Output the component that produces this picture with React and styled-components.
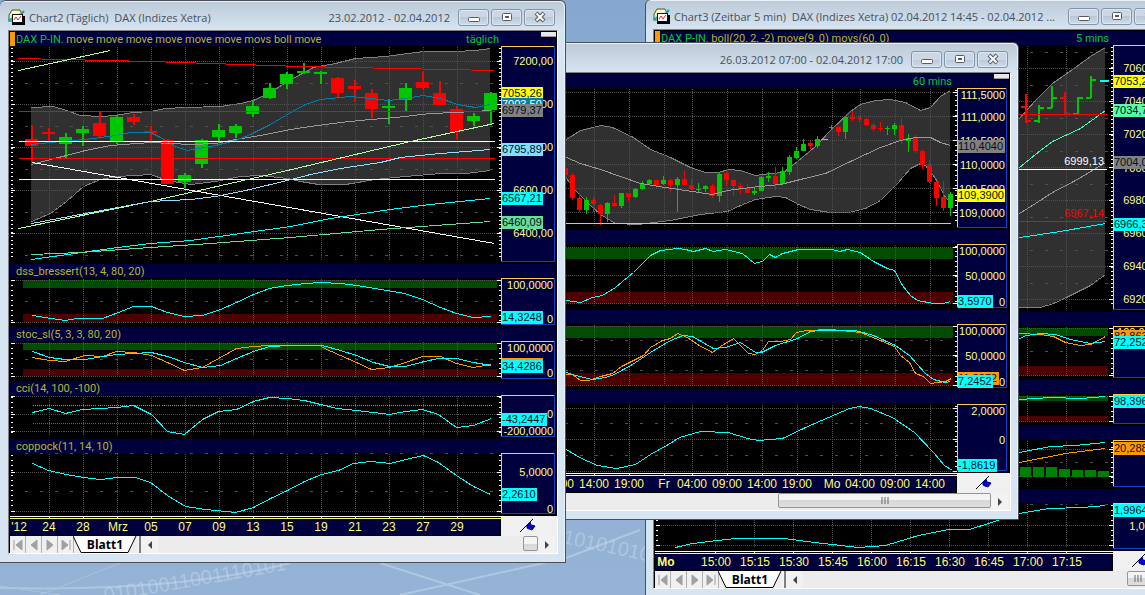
import React from "react";
import styled, { createGlobalStyle } from "styled-components";

const NAVY = "#00003f";
const CYAN = "#00ffff";
const RED = "#ff0000";
const GREEN = "#00c800";
const ORANGE = "#ff9900";
const YELLOW = "#ffff00";
const GREY = "#808080";

// candle: [x, high, low, bodyTop, bodyBottom, color]
const dailyCandles = [
  [31, 125, 162, 139, 146, "r"],
  [48, 128, 141, 132, 134, "r"],
  [65, 133, 159, 137, 144, "g"],
  [82, 126, 146, 129, 133, "g"],
  [99, 112, 138, 123, 136, "r"],
  [116, 116, 144, 117, 142, "g"],
  [133, 114, 125, 117, 122, "r"],
  [150, 126, 141, 131, 133, "r"],
  [167, 139, 184, 140, 184, "r"],
  [184, 173, 188, 175, 182, "g"],
  [201, 139, 168, 140, 164, "g"],
  [218, 124, 141, 130, 137, "g"],
  [235, 124, 138, 126, 133, "g"],
  [252, 101, 117, 106, 114, "g"],
  [269, 83, 99, 88, 98, "g"],
  [286, 72, 89, 74, 84, "g"],
  [303, 63, 74, 71, 73, "g"],
  [320, 71, 84, 72, 74, "g"],
  [337, 77, 97, 78, 93, "r"],
  [354, 80, 102, 86, 89, "r"],
  [371, 89, 118, 93, 109, "r"],
  [388, 99, 124, 106, 108, "g"],
  [405, 83, 111, 88, 100, "g"],
  [422, 72, 89, 82, 88, "r"],
  [439, 81, 105, 93, 105, "r"],
  [456, 106, 139, 109, 132, "r"],
  [473, 113, 126, 116, 121, "g"],
  [490, 92, 124, 93, 110, "g"],
];

const hourCandles = [
  [565, 168, 175, 168, 175, "r"],
  [572, 173, 200, 175, 198, "r"],
  [579, 193, 212, 198, 210, "r"],
  [586, 197, 214, 200, 210, "g"],
  [593, 197, 212, 200, 204, "r"],
  [600, 204, 225, 205, 214, "r"],
  [607, 202, 222, 203, 214, "g"],
  [614, 195, 207, 203, 206, "r"],
  [621, 193, 208, 193, 206, "g"],
  [628, 193, 201, 193, 197, "r"],
  [635, 188, 198, 189, 197, "g"],
  [642, 181, 190, 184, 189, "g"],
  [649, 179, 185, 180, 184, "g"],
  [656, 180, 187, 180, 185, "r"],
  [663, 176, 185, 180, 184, "g"],
  [670, 179, 192, 180, 185, "r"],
  [677, 177, 212, 179, 185, "g"],
  [684, 171, 185, 179, 185, "r"],
  [691, 179, 190, 185, 189, "r"],
  [698, 183, 193, 189, 190, "g"],
  [705, 185, 192, 186, 189, "g"],
  [712, 184, 198, 186, 196, "r"],
  [719, 172, 202, 174, 196, "g"],
  [726, 172, 186, 173, 180, "r"],
  [733, 179, 196, 180, 186, "r"],
  [740, 183, 194, 186, 188, "r"],
  [747, 184, 193, 188, 193, "r"],
  [754, 188, 195, 191, 193, "g"],
  [761, 176, 191, 177, 191, "g"],
  [768, 172, 182, 176, 178, "g"],
  [775, 167, 190, 176, 184, "r"],
  [782, 167, 184, 171, 184, "g"],
  [789, 155, 175, 157, 172, "g"],
  [796, 147, 159, 151, 158, "g"],
  [803, 139, 151, 144, 151, "g"],
  [810, 141, 149, 143, 146, "r"],
  [817, 136, 148, 139, 146, "g"],
  [831, 125, 130, 127, 128, "g"],
  [838, 126, 136, 127, 132, "r"],
  [845, 116, 139, 117, 132, "g"],
  [852, 111, 121, 117, 119, "r"],
  [859, 116, 122, 118, 119, "r"],
  [866, 118, 126, 119, 125, "r"],
  [873, 123, 131, 125, 129, "r"],
  [880, 122, 132, 128, 129, "r"],
  [887, 126, 135, 128, 129, "g"],
  [894, 123, 135, 125, 129, "g"],
  [901, 118, 144, 125, 141, "r"],
  [908, 134, 152, 138, 141, "g"],
  [915, 135, 153, 138, 151, "r"],
  [922, 149, 169, 151, 165, "r"],
  [929, 160, 183, 165, 182, "r"],
  [936, 181, 206, 182, 198, "r"],
  [943, 181, 211, 197, 208, "r"],
  [950, 192, 216, 194, 208, "g"],
];

// bar: [x, high, low, open, close, color]
const fiveMinBars = [
  [1026, 94, 123, 107, 121, "r"],
  [1039, 105, 123, 121, 108, "g"],
  [1052, 86, 108, 108, 98, "g"],
  [1065, 92, 115, 98, 114, "r"],
  [1078, 97, 114, 114, 98, "g"],
  [1091, 76, 98, 98, 80, "g"],
];

const range = (start, step, count) =>
  Array.from({ length: count }, (_, i) => start + i * step);

const dailyChart = {
  left: 10,
  width: 547,
  plotEnd: 494,
  axisX: 501,
  axisEnd: 555,
  grid: range(49, 34, 13),
  panes: [
    {
      label: (
        <>
          <i>DAX P-IN.</i> move move move move move move movs boll move
        </>
      ),
      corner: "täglich",
      top: 46,
      height: 218,
      dotted: [61, 104, 147, 190, 233],
      dashed: [83, 126, 169, 212, 255],
      tick: 4,
      fill: "31,107 53,106 66,110 80,115 100,116 115,115 133,112 150,111 165,108 185,107 220,106 240,103 253,100 270,92 287,81 300,74 313,67 335,63 355,58 385,56 423,51 455,51 475,50 490,48 490,170 465,173 440,173 405,176 375,179 345,184 318,184 300,181 287,178 260,175 240,176 215,181 190,184 167,180 150,174 135,175 117,176 100,179 83,186 66,201 50,213 31,221",
      candles: dailyCandles,
      body: 13,
      lines: [
        ["#999999", "31,164 50,159 66,155 85,150 110,145 150,142 190,144 215,143 235,139 260,135 290,129 310,126 340,122 370,119 395,117 430,113 455,112 490,110"],
        ["#0080a8", "31,144 60,141 85,139 115,135 130,132 150,132 160,137 175,146 187,150 215,145 235,140 250,134 270,124 290,112 305,104 320,99 350,96 370,98 388,100 405,98 423,95 440,98 457,104 475,107 490,104"],
        [RED, "18,58 150,61 300,66 494,70"],
        [RED, "18,111 494,111"],
        ["#ffffff", "18,141 494,141"],
        [RED, "18,158 494,158"],
        ["#ffffff", "18,179 494,179"],
        ["#b0ffa0", "18,70 110,50"],
        ["#b0ffa0", "18,228 150,201 287,170 410,141 494,123"],
        ["#ffffff", "32,162 494,243"],
        ["#90e0ff", "31,223 150,201 190,199 215,196 245,190 287,180 310,174 340,168 380,162 400,157 440,153 490,149"],
        [CYAN, "31,259 110,248 150,243 190,240 240,233 290,226 330,218 390,209 430,204 490,198"],
        ["#66dd99", "31,254 80,252 150,247 210,243 290,237 380,229 490,221"],
      ],
      labels: [["7200,00", 61], ["7000,00", 104], ["6800,00", 147], ["6600,00", 190], ["6400,00", 233]],
      tags: [
        ["7053,26", 93, YELLOW],
        ["7003,50", 104, "#0080a8", "#ffffff"],
        ["6979,37", 110, GREY],
        ["6795,89", 149, "#80dfff"],
        ["6567,21", 198, CYAN],
        ["6460,09", 222, "#66dd99"],
      ],
    },
    {
      label: "dss_bressert(13, 4, 80, 20)",
      top: 278,
      height: 49,
      zones: [[280, 8, "#004c00"], [314, 8, "#4c0000"]],
      zoneX: 23,
      dotted: [280, 322],
      dashed: [301],
      lines: [
        [CYAN, "32,315 51,318 65,320 76,318 102,318 118,312 133,306 151,306 167,312 184,316 202,315 220,309 236,302 253,294 269,288 287,285 305,283 320,282 340,283 356,285 375,288 404,293 422,299 440,307 456,313 473,317 491,316"],
      ],
      labels: [["100,0000", 285], ["0", 319]],
      tags: [["14,3248", 317, CYAN]],
    },
    {
      label: "stoc_sl(5, 3, 3, 80, 20)",
      top: 341,
      height: 40,
      zones: [[343, 7, "#004c00"], [369, 7, "#4c0000"]],
      zoneX: 23,
      dotted: [343, 376],
      dashed: [359],
      lines: [
        [ORANGE, "32,357 49,360 65,361 84,355 102,356 116,351 133,352 151,355 167,362 184,370 202,367 220,357 236,348 253,346 269,345 320,345 322,347 340,355 356,362 371,369 389,367 405,362 422,356 440,356 456,363 473,367 491,364"],
        [CYAN, "32,351 49,357 65,359 84,359 116,354 133,353 151,352 167,356 184,362 202,367 220,365 236,358 253,351 269,346 291,345 322,345 340,350 356,355 373,362 389,366 405,366 424,361 438,358 456,358 473,362 491,365"],
      ],
      labels: [["100,0000", 348], ["0", 373]],
      tags: [["34,4286", 364, ORANGE], ["34,4286", 366, CYAN]],
    },
    {
      label: "cci(14, 100, -100)",
      top: 395,
      height: 44,
      dotted: [396, 414, 431],
      dashed: [],
      levels: [[405, "#00ff00"], [423, "#ff2020"]],
      lines: [
        [CYAN, "32,412 49,408 65,413 82,409 116,407 133,405 151,414 167,431 184,434 202,419 218,411 236,409 253,401 269,397 287,398 304,400 320,404 337,408 356,410 373,412 389,414 405,411 422,409 438,414 456,427 473,425 491,418"],
      ],
      labels: [["0", 414], ["-200,0000", 431]],
      tags: [["-43,2447", 419, CYAN]],
    },
    {
      label: "coppock(11, 14, 10)",
      top: 453,
      height: 63,
      dotted: [472, 511],
      dashed: [453, 491],
      lines: [
        [CYAN, "32,463 48,470 66,474 83,477 100,479 117,477 135,477 150,482 167,495 185,506 205,509 235,512 253,507 270,498 287,490 304,481 321,474 338,470 353,463 370,461 390,463 405,459 423,455 438,462 456,475 473,486 490,494"],
      ],
      labels: [["5,0000", 472], ["0", 509]],
      tags: [["2,2610", 494, CYAN]],
    },
  ],
  times: [
    ["'12", 19], ["24", 49], ["28", 83], ["Mrz", 118], ["05", 151], ["07", 185], ["09", 219],
    ["13", 253], ["15", 287], ["19", 321], ["21", 355], ["23", 389], ["27", 423], ["29", 457],
  ],
};

const hourChart = {
  left: 490,
  width: 520,
  plotEnd: 950,
  axisX: 957,
  axisEnd: 1007,
  grid: [559, 594, 629, 664, 692, 727, 762, 797, 832, 860, 895, 930],
  panes: [
    {
      label: "",
      corner: "60 mins",
      top: 88,
      height: 142,
      dotted: [92, 116, 140, 164, 188, 212],
      dashed: [],
      fill: "560,142 566,139 580,130 601,125 612,127 633,137 650,149 670,157 690,167 705,172 718,172 728,169 740,170 755,175 770,173 783,172 797,161 815,146 830,130 850,111 860,104 875,100 890,99 905,102 920,110 930,107 940,96 950,90 950,202 945,197 935,178 925,165 920,163 910,168 897,183 880,200 865,208 848,212 830,212 810,209 798,204 785,197 775,196 755,199 740,205 727,211 700,214 670,220 638,224 615,223 600,214 590,205 575,190 566,178 560,170",
      candles: hourCandles,
      body: 5,
      thin: true,
      lines: [
        ["#999999", "560,155 566,157 580,163 600,169 620,176 640,183 665,187 685,190 712,194 727,190 750,187 780,184 800,179 825,173 850,161 880,147 900,140 915,137 930,137 940,142 950,145"],
        [CYAN, "821,139 827,139"],
        ["#90f080", "560,223 950,223"],
      ],
      labels: [["111,5000", 95], ["111,0000", 117], ["110,5000", 141], ["110,0000", 165], ["109,5000", 189], ["109,0000", 213]],
      tags: [["110,4040", 146, GREY], ["109,3900", 195, YELLOW]],
    },
    {
      label: "",
      top: 244,
      height: 66,
      zones: [[248, 11, "#004c00"], [292, 11, "#4c0000"]],
      zoneX: 520,
      dotted: [247, 275, 303],
      dashed: [],
      lines: [
        [CYAN, "560,299 566,300 580,302 592,297 602,295 615,287 622,281 633,272 650,255 660,250 677,248 685,249 693,251 705,248 713,251 725,249 742,253 754,263 762,261 769,254 775,257 782,253 798,249 832,249 839,251 847,249 860,252 873,261 887,268 894,270 902,285 910,295 917,300 933,303 943,303 950,301"],
      ],
      labels: [["100,0000", 251], ["50,0000", 276], ["0", 302]],
      tags: [["3,5970", 301, CYAN]],
    },
    {
      label: "",
      top: 324,
      height: 66,
      zones: [[326, 12, "#004c00"], [373, 12, "#4c0000"]],
      zoneX: 520,
      dotted: [326, 355, 385],
      dashed: [340, 370],
      lines: [
        [ORANGE, "560,374 572,374 580,380 588,380 600,376 612,373 621,366 643,355 650,347 662,340 670,338 677,333 687,337 697,344 712,352 720,346 733,338 740,345 748,353 755,354 762,350 768,341 780,341 790,339 796,332 806,330 830,329 860,332 875,338 894,346 900,355 909,362 915,373 923,376 930,383 945,381 951,378"],
        [CYAN, "560,371 566,372 575,375 592,379 605,377 614,374 632,364 650,352 670,340 683,335 692,336 713,348 725,347 740,342 755,352 761,352 775,345 797,338 810,331 820,330 855,330 873,335 895,345 909,355 925,373 933,379 945,382 950,381"],
      ],
      labels: [["100,0000", 331], ["50,0000", 356], ["0", 382]],
      tags: [["11,2872", 378, ORANGE], ["7,2452", 381, CYAN]],
    },
    {
      label: "",
      top: 404,
      height: 69,
      dotted: [408, 439, 471],
      dashed: [423, 455],
      lines: [
        [CYAN, "560,445 566,449 579,457 597,465 616,468 635,464 650,454 668,444 679,437 700,431 728,432 747,438 758,440 782,438 803,428 821,420 849,408 859,406 870,408 892,417 914,432 933,452 944,465 952,470"],
      ],
      labels: [["2,0000", 411], ["0", 440]],
      tags: [["-1,8619", 465, CYAN]],
    },
  ],
  times: [
    ["09:00", 559], ["14:00", 594], ["19:00", 629], ["Fr", 664], ["04:00", 692], ["09:00", 727],
    ["14:00", 762], ["19:00", 797], ["Mo", 832], ["04:00", 860], ["09:00", 895], ["14:00", 930],
  ],
};

const fiveMinChart = {
  left: 655,
  width: 512,
  plotEnd: 1105,
  axisX: 1113,
  axisEnd: 1165,
  grid: range(715, 39, 10),
  panes: [
    {
      label: (
        <>
          <i>DAX P-IN.</i> boll(20, 2, -2) move(9, 0) movs(60, 0)
        </>
      ),
      corner: "5 mins",
      top: 45,
      height: 267,
      dotted: range(68, 33, 8),
      dashed: range(52, 33, 8),
      tick: 4,
      fill: "1000,138 1019,118 1035,100 1052,83 1075,67 1090,56 1105,47 1105,274 1090,285 1066,297 1053,303 1040,307 1000,307",
      bars: fiveMinBars,
      lines: [
        ["#999999", "1010,218 1019,213 1035,203 1052,192 1075,180 1092,170 1105,162"],
        ["#44ffaa", "1010,174 1019,167 1040,150 1052,141 1080,128 1105,110"],
        [RED, "1010,114 1106,114"],
        ["#ffffff", "1010,169 1106,169"],
        [RED, "1010,221 1106,221"],
        [CYAN, "1010,238 1019,237 1060,231 1105,223"],
        [CYAN, "1099,80 1108,80", 2],
      ],
      notes: [["6999,13", 161, "#ffffff"], ["6967,14", 213, RED]],
      labels: [["7060,00", 68], ["7040,00", 101], ["7020,00", 134], ["7000,00", 168], ["6980,00", 200], ["6960,00", 233], ["6940,00", 266], ["6920,00", 299]],
      tags: [
        ["7053,26", 81, YELLOW],
        ["7034,72", 110, "#55ffaa"],
        ["7004,04", 162, GREY],
        ["6966,37", 224, CYAN],
      ],
    },
    {
      label: "",
      top: 326,
      height: 54,
      zones: [[328, 8, "#004c00"], [366, 9, "#4c0000"]],
      zoneX: 665,
      dotted: [328, 375],
      dashed: [351],
      lines: [
        [ORANGE, "1010,332 1019,333 1040,334 1053,336 1065,342 1080,345 1090,344 1105,336"],
        [CYAN, "1010,342 1019,338 1026,335 1040,333 1055,334 1070,339 1090,343 1105,341"],
      ],
      labels: [["100,0000", 332]],
      tags: [["82,8635", 336, ORANGE], ["72,2523", 342, CYAN]],
    },
    {
      label: "",
      top: 394,
      height: 32,
      zones: [[396, 5, "#004c00"], [416, 5, "#4c0000"]],
      zoneX: 665,
      dotted: [396, 421],
      dashed: [],
      lines: [[CYAN, "1010,399 1019,399 1050,397 1080,398 1105,396"]],
      labels: [],
      tags: [["98,3961", 401, CYAN]],
    },
    {
      label: "",
      top: 440,
      height: 49,
      dotted: [449, 476],
      dashed: [462],
      histogram: [[1020, 467], [1033, 467], [1046, 467], [1059, 469], [1072, 470], [1085, 470], [1098, 471]],
      lines: [
        [CYAN, "1010,454 1019,452 1050,446 1075,445 1105,442"],
        [ORANGE, "1010,464 1019,462 1065,453 1105,448"],
      ],
      labels: [],
      tags: [["20,2889", 448, ORANGE]],
    },
    {
      label: "",
      top: 503,
      height: 48,
      dotted: [525, 545],
      dashed: [504],
      lines: [
        [CYAN, "675,547 692,543 717,540 735,538 784,538 814,542 858,547 885,545 918,535 948,529 969,529 988,523 1019,513 1049,508 1082,507 1105,505"],
      ],
      labels: [["1,0000", 526]],
      tags: [["1,9964", 510, CYAN]],
    },
  ],
  times: [
    ["Mo", 666, true], ["15:00", 716], ["15:15", 755], ["15:30", 794], ["15:45", 833], ["16:00", 872],
    ["16:15", 911], ["16:30", 950], ["16:45", 989], ["17:00", 1028], ["17:15", 1067],
  ],
};

const tone = (c) => (c === "r" ? RED : GREEN);

// width of a value in the 11px axis font
const textWidth = (text) =>
  text.split("").reduce((sum, ch) => sum + (ch === "," ? 3 : ch === "-" ? 4 : 6), 0);

// the upper edge ends where the outline turns straight down
const bandEdges = (outline) => {
  const points = outline.split(" ");
  const turn = points.findIndex(
    (p, i) => i > 0 && p.split(",")[0] === points[i - 1].split(",")[0]
  );
  return [points.slice(0, turn).join(" "), points.slice(turn).join(" ")];
};

const Plot = ({ chart, pane }) => {
  const { left, width, plotEnd, axisX, axisEnd, grid } = chart;
  const bottom = pane.top + pane.height;
  const axisBottom = bottom - 2;
  const step = pane.tick || 5;
  const ticks = range(pane.top + 2, step, Math.floor((pane.height - 4) / step));
  return (
    <Canvas
      viewBox={`${left} ${pane.top} ${width} ${pane.height}`}
      width="100%"
      height={pane.height}
      shapeRendering="crispEdges"
    >
      {pane.fill && <polygon points={pane.fill} fill="#303030" />}
      {(pane.zones || []).map(([y, h, fill]) => (
        <rect key={y} x={pane.zoneX} y={y} width={plotEnd - pane.zoneX + 3} height={h} fill={fill} />
      ))}
      <g transform="translate(0.5 0.5)" fill="none">
        {pane.fill &&
          bandEdges(pane.fill).map((edge) => (
            <polyline key={edge} points={edge} stroke="#808080" />
          ))}
        <g stroke="#505050" strokeDasharray="1 1">
          {grid.map((x) => (
            <path key={x} d={`M${x} ${pane.top}V${axisBottom - 2}`} />
          ))}
          {pane.dotted.map((y) => (
            <path key={y} d={`M${left + 5} ${y}H${plotEnd + 3}`} />
          ))}
          {pane.dashed.map((y) => (
            <path key={y} d={`M${left + 14} ${y}H${plotEnd + 3}`} strokeDasharray="3 12" />
          ))}
        </g>
        {(pane.levels || []).map(([y, c]) => (
          <path key={y} d={`M32 ${y}H491`} stroke={c} strokeDasharray="1 1" />
        ))}
        <g stroke="#ffffff">
          {ticks.map((y) => (
            <path key={y} d={`M${left} ${y}h2M${axisX - 3} ${y}h2`} />
          ))}
          {pane.dotted.map((y) => (
            <path key={y} d={`M${left} ${y}h4M${axisX - 5} ${y}h4`} />
          ))}
        </g>
      </g>
      {(pane.candles || []).map(([x, high, low, top, base, c]) => (
        <g key={x} fill={tone(c)}>
          <rect x={x} y={high} width={pane.thin ? 1 : 2} height={low - high} />
          <rect x={x - (pane.body - 1) / 2} y={top} width={pane.body} height={base - top} />
        </g>
      ))}
      {(pane.bars || []).map(([x, high, low, open, close, c]) => (
        <g key={x} fill={tone(c)}>
          <rect x={x - 1} y={high} width={2} height={low - high} />
          <rect x={x - 5} y={open - 1} width={5} height={2} />
          <rect x={x} y={close - 1} width={5} height={2} />
        </g>
      ))}
      {(pane.histogram || []).map(([x, y]) => (
        <rect key={x} x={x} y={y} width={11} height={477 - y} fill="#008000" />
      ))}
      <g transform="translate(0.5 0.5)" fill="none">
        {pane.lines.map(([c, points, w]) => (
          <polyline key={points + c} points={points} stroke={c} strokeWidth={w || 1} />
        ))}
      </g>
      {(pane.notes || []).map(([text, y, c]) => (
        <AxisText key={text} x={plotEnd - 1} y={y + 4} fill={c} textAnchor="end">
          {text}
        </AxisText>
      ))}
      <rect x={axisX} y={pane.top} width={axisEnd - axisX} height={axisBottom - pane.top} fill="#1040d0" />
      <rect x={axisX} y={pane.top} width={axisEnd - axisX - 1} height={axisBottom - pane.top - 1} fill="#ffcc44" />
      <rect x={axisX + 1} y={pane.top + 1} width={axisEnd - axisX - 2} height={axisBottom - pane.top - 2} fill={NAVY} />
      {pane.labels.map(([text, y]) => (
        <AxisText key={text} x={axisEnd - 2} y={y + 4} fill="#ffff88" textAnchor="end">
          {text}
        </AxisText>
      ))}
      {pane.tags.map(([text, y, bg, fg]) => (
        <g key={bg}>
          <rect x={axisX + 1} y={y - 6} width={textWidth(text) + 2} height={13} fill={bg} />
          <AxisText x={axisX + 1} y={y + 4} fill={fg || "#001020"}>
            {text}
          </AxisText>
        </g>
      ))}
    </Canvas>
  );
};

const TimeAxis = ({ chart }) => {
  const { left, width, axisX, grid, times } = chart;
  return (
    <Canvas viewBox={`${left} 0 ${width} 20`} width="100%" height="20" shapeRendering="crispEdges">
      <rect x={left} y="0" width={axisX - left} height="1" fill="#ffffff" />
      <rect x={left} y="2" width={axisX - left} height="1" fill="#ffff66" />
      <rect x={left} y="3" width={axisX - left - 1} height="16" fill={NAVY} />
      {grid.map((x) => (
        <rect key={x} x={x} y="0" width="1" height="3" fill="#ffff66" />
      ))}
      {times.map(([text, x, bold]) => (
        <TimeText key={x} x={x} y="15" textAnchor="middle" $bold={bold}>
          {text}
        </TimeText>
      ))}
      <rect x={axisX} y="0" width={left + width - axisX} height="20" fill="#f0f0f0" />
      <g transform={`translate(${axisX + 18} 2)`} shapeRendering="auto">
        <path d="M1 14L14 1" stroke="#000" />
        <path d="M8 7l3-3 1 3 4 1-3 4-3-1-2-1z" fill="#0000e0" stroke="#000080" />
      </g>
    </Canvas>
  );
};

const TitleIcon = () => (
  <svg width="17" height="16" viewBox="0 0 17 16">
    <path d="M1 6L4 1h8l2 4v7H1z" fill="#f0f09a" stroke="#55552a" />
    <path d="M4 3h8M3 5h8" stroke="#ffffff" />
    <path d="M0 12l5-3 4 1 7-8" stroke="#00a8d0" fill="none" strokeWidth="2" />
    <path d="M4 15h12V7" stroke="#000" strokeWidth="2" fill="none" />
    <rect x="4.5" y="5.5" width="10" height="8" fill="#ffffff" stroke="#111111" />
    <path d="M6 11l2-3 2 3 3-4" stroke="#dd2222" fill="none" />
  </svg>
);

const WindowButtons = () => (
  <ButtonGroup>
    <CaptionButton aria-label="Minimieren">
      <svg width="12" height="12">
        <rect x="0.5" y="6.5" width="11" height="4" rx="1" fill="#fff" stroke="#555b66" />
      </svg>
    </CaptionButton>
    <CaptionButton aria-label="Maximieren">
      <svg width="12" height="12">
        <rect x="1.5" y="2.5" width="9" height="7" rx="1" fill="#fff" stroke="#555b66" />
        <rect x="4.5" y="5.5" width="3" height="1" fill="#fff" stroke="#555b66" />
      </svg>
    </CaptionButton>
    <CaptionButton aria-label="Schließen">
      <svg width="12" height="12">
        <path d="M2 2l8 8M10 2l-8 8" stroke="#555b66" strokeWidth="4" />
        <path d="M2.5 2.5l7 7M9.5 2.5l-7 7" stroke="#fff" strokeWidth="2" />
      </svg>
    </CaptionButton>
  </ButtonGroup>
);

const SheetTabs = () => (
  <>
    {["M4 3v10M12 3v10L6 8z", "M11 3v10L5 8z", "M5 3v10l6-5z", "M4 3v10l6-5zM12 3v10"].map((d, i) => (
      <NavButton key={d} aria-label={`Blatt ${i + 1}`}>
        <svg width="14" height="16" viewBox="1 0 14 16">
          <path d={d} fill="#a0a0a0" stroke="#a0a0a0" />
        </svg>
      </NavButton>
    ))}
    <SheetTab>
      <svg width="64" height="17">
        <path d="M0 0L8 16H55L63 0z" fill="#fff" />
        <path d="M0 0L8 16.5H55L63 0" fill="none" stroke="#000" />
      </svg>
      <span>Blatt1</span>
    </SheetTab>
    <Splitter />
  </>
);

const ScrollArrow = ({ dir }) => (
  <ArrowButton aria-label={dir === "left" ? "Nach links" : "Nach rechts"}>
    <svg width="6" height="8">
      <path d={dir === "left" ? "M5 0v8L1 4z" : "M1 0v8L5 4z"} fill="#444" />
    </svg>
  </ArrowButton>
);

const ChartWindow = ({ frame, title, dates, chart, tabs, thumb, flush }) => (
  <Frame $frame={frame} $flush={flush}>
    <TitleBar>
      {title && <TitleIcon />}
      <Title>{title}</Title>
      <Title>{dates}</Title>
      <WindowButtons />
    </TitleBar>
    <Client>
      {chart.panes.map((pane) => (
        <React.Fragment key={pane.top}>
          <Strip $main={!!pane.corner}>
            <span>{pane.label}</span>
            {pane.corner && <Interval>{pane.corner}</Interval>}
            {pane.corner && <Grip />}
          </Strip>
          <Plot chart={chart} pane={pane} />
        </React.Fragment>
      ))}
      <TimeAxis chart={chart} />
      <BottomBar>
        {tabs && <SheetTabs />}
        <ScrollArrow dir="left" />
        <Track>
          <Thumb $width={thumb}>
            {thumb > 16 && (
              <svg width="8" height="7">
                <path d="M1 0v7M4 0v7M7 0v7" stroke="#666" />
              </svg>
            )}
          </Thumb>
        </Track>
        <ScrollArrow dir="right" />
      </BottomBar>
    </Client>
  </Frame>
);

const App = () => (
  <Desktop>
    <GlobalStyle />
    <Wallpaper viewBox="0 0 1145 595" preserveAspectRatio="xMinYMin slice">
      <path d="M0 588Q180 592 290 563M380 563L480 595M400 595L566 558L640 530" stroke="#c0d6ec" strokeWidth="2" fill="none" opacity="0.6" />
      <path d="M40 595L120 563M0 586L60 595" stroke="#a9c4e0" fill="none" />
      <WallText x="105" y="602" transform="rotate(-10 105 602)">01010011001110101</WallText>
      <WallText x="562" y="543" transform="rotate(12 562 543)">1010101010</WallText>
    </Wallpaper>
    <ChartWindow
      frame={[645, -1, 531, 598]}
      title="Chart3 (Zeitbar 5 min)&nbsp; DAX (Indizes Xetra) 02.04.2012 14:45 - 02.04.2012 ..."
      chart={fiveMinChart}
      tabs
      thumb={21}
    />
    <ChartWindow
      frame={[480, 42, 539, 478]}
      dates="26.03.2012 07:00 - 02.04.2012 17:00"
      chart={hourChart}
      thumb={213}
    />
    <ChartWindow
      frame={[0, 0, 566, 563]}
      title="Chart2 (Täglich)&nbsp; DAX (Indizes Xetra)"
      dates="23.02.2012 - 02.04.2012"
      chart={dailyChart}
      tabs
      thumb={15}
      flush
    />
  </Desktop>
);

const GlobalStyle = createGlobalStyle`
  body {
    margin: 0;
    overflow: hidden;
  }
`;

const Desktop = styled.main`
  position: relative;
  height: 100vh;
  overflow: hidden;
  background: linear-gradient(#86a8d0, #95b3d5);
  font-family: "Liberation Sans", Arial, sans-serif;
`;

const Wallpaper = styled.svg`
  display: block;
  width: 100%;
  height: 100%;
`;

const WallText = styled.text`
  font-size: 20px;
  fill: #c6d9ec;
  opacity: 0.5;
`;

const Frame = styled.section`
  position: absolute;
  left: ${({ $frame }) => $frame[0]}px;
  top: ${({ $frame }) => $frame[1]}px;
  width: ${({ $frame }) => $frame[2]}px;
  height: ${({ $frame }) => $frame[3]}px;
  box-sizing: border-box;
  display: flex;
  flex-direction: column;
  padding: 0 7px 7px ${({ $flush }) => ($flush ? 8 : 7)}px;
  border: 1px solid #4a4f57;
  border-left-width: ${({ $flush }) => ($flush ? 0 : 1)}px;
  border-radius: 6px 6px 0 0;
  background: linear-gradient(#bccad8, #d7e4f2 30px);
  box-shadow: inset -1px 1px 0 #e8f0f8;
`;

const TitleBar = styled.header`
  display: flex;
  flex: 0 0 29px;
  align-items: center;
  gap: 4px;
  padding: 3px 3px 0 0;
  box-sizing: border-box;
`;

const Title = styled.span`
  font: 11px "Open Sans", "Noto Sans", sans-serif;
  color: #46505c;
  white-space: nowrap;

  &:first-of-type {
    flex: 1;
  }
`;

const ButtonGroup = styled.div`
  display: flex;
  gap: 2px;
  margin-left: 4px;
`;

const CaptionButton = styled.button`
  display: flex;
  align-items: center;
  justify-content: center;
  width: 31px;
  height: 17px;
  padding: 0;
  border: 1px solid #8494a8;
  border-radius: 3px;
  background: linear-gradient(#cbd7e4 50%, #b9c8d8 50%, #cfdcea);
  box-shadow: inset 0 0 0 1px #dde7f1;
`;

const Client = styled.div`
  display: flex;
  flex-direction: column;
  padding: 1px 0 0 1px;
  border: 1px solid;
  border-color: #808080 #ffffff #ffffff #808080;
  background: #000;
`;

const Strip = styled.div`
  display: flex;
  align-items: center;
  height: 14px;
  box-sizing: border-box;
  margin-right: 1px;
  padding-left: ${({ $main }) => ($main ? 1 : 6)}px;
  border-left: ${({ $main }) => ($main ? `5px solid ${ORANGE}` : "0")};
  background: ${NAVY};
  color: #b8b820;
  font-family: Roboto, "Liberation Sans", sans-serif;
  font-size: 11px;
  white-space: pre;

  span:first-child {
    flex: 1;
  }

  i {
    font-style: normal;
    color: #00c838;
  }
`;

const Interval = styled.span`
  color: #00c838;
`;

const Grip = styled.div`
  align-self: flex-start;
  width: 15px;
  height: 5px;
  margin-left: 42px;
  box-sizing: border-box;
  background: #e8e8e8;
  border-bottom: 1px solid #999;
`;

const Canvas = styled.svg`
  display: block;
`;

const AxisText = styled.text`
  font-size: 11px;
`;

const TimeText = styled.text`
  font-size: 12px;
  font-weight: ${({ $bold }) => ($bold ? "bold" : "normal")};
  fill: #ffff66;
`;

const BottomBar = styled.footer`
  display: flex;
  height: 17px;
  padding-right: 2px;
  background: #eeeeee;
`;

const NavButton = styled.button`
  display: flex;
  align-items: center;
  justify-content: center;
  width: 16px;
  padding: 0;
  border: 0;
  border-right: 1px solid #b0b0b0;
  background: #f0f0f0;
`;

const SheetTab = styled.button`
  display: grid;
  align-items: center;
  justify-items: center;
  width: 64px;
  margin-left: -1px;
  padding: 0;
  border: 0;
  background: none;
  font: bold 12px/16px "Open Sans", "Noto Sans", sans-serif;
  color: #000;

  > * {
    grid-area: 1 / 1;
  }
`;

const Splitter = styled.div`
  width: 4px;
  box-sizing: border-box;
  border-right: 2px solid #808080;
  background: #f4f4f4;
`;

const ArrowButton = styled.button`
  display: flex;
  align-items: center;
  justify-content: center;
  width: 17px;
  padding: 0;
  border: 0;
  background: #f2f2f2;
`;

const Track = styled.div`
  display: flex;
  flex: 1;
  justify-content: flex-end;
  background: #ececec;
`;

const Thumb = styled.div`
  display: flex;
  align-items: center;
  justify-content: center;
  width: ${({ $width }) => $width}px;
  height: 15px;
  box-sizing: border-box;
  border: 1px solid #959595;
  border-radius: 2px;
  background: linear-gradient(#f4f4f4 50%, #d8d8d8 50%, #dedede);
`;

export default App;
